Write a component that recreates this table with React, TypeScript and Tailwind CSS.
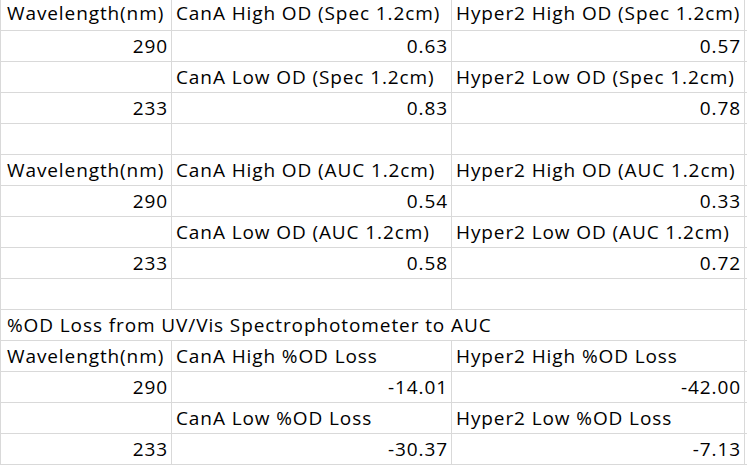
type Cell = { text?: string; align?: 'left' | 'right'; span?: boolean };

const rows: Cell[][] = [
  [{ text: 'Wavelength(nm)' }, { text: 'CanA High OD (Spec 1.2cm)' }, { text: 'Hyper2 High OD (Spec 1.2cm)' }],
  [{ text: '290', align: 'right' }, { text: '0.63', align: 'right' }, { text: '0.57', align: 'right' }],
  [{}, { text: 'CanA Low OD (Spec 1.2cm)' }, { text: 'Hyper2 Low OD (Spec 1.2cm)' }],
  [{ text: '233', align: 'right' }, { text: '0.83', align: 'right' }, { text: '0.78', align: 'right' }],
  [{}, {}, {}],
  [{ text: 'Wavelength(nm)' }, { text: 'CanA High OD (AUC 1.2cm)' }, { text: 'Hyper2 High OD (AUC 1.2cm)' }],
  [{ text: '290', align: 'right' }, { text: '0.54', align: 'right' }, { text: '0.33', align: 'right' }],
  [{}, { text: 'CanA Low OD (AUC 1.2cm)' }, { text: 'Hyper2 Low OD (AUC 1.2cm)' }],
  [{ text: '233', align: 'right' }, { text: '0.58', align: 'right' }, { text: '0.72', align: 'right' }],
  [{}, {}, {}],
  [{ text: '%OD Loss from UV/Vis Spectrophotometer to AUC', span: true }],
  [{ text: 'Wavelength(nm)' }, { text: 'CanA High %OD Loss' }, { text: 'Hyper2 High %OD Loss' }],
  [{ text: '290', align: 'right' }, { text: '-14.01', align: 'right' }, { text: '-42.00', align: 'right' }],
  [{}, { text: 'CanA Low %OD Loss' }, { text: 'Hyper2 Low %OD Loss' }],
  [{ text: '233', align: 'right' }, { text: '-30.37', align: 'right' }, { text: '-7.13', align: 'right' }],
];

export default function App() {
  return (
    <div className="w-[747px] h-[466px] overflow-hidden bg-white text-black font-['Open_Sans',sans-serif] text-[19px] tracking-[0.9px]">
      <div className="grid grid-cols-[172px_280px_293px_1fr]">
        {rows.map((row, r) => {
          const lead = r === 0 ? 'leading-[27px]' : 'leading-[30px]';
          const cells = row.map((c, i) => {
            const first = i === 0;
            const border = first ? 'border-l border-r border-b' : 'border-r border-b';
            const pad = first ? 'pl-[6px]' : 'pl-[4px]';
            const align = c.align === 'right' ? 'text-right pr-[3px]' : pad;
            return (
              <div
                key={i}
                className={`h-[31px] whitespace-nowrap overflow-visible border-[#d9d9d9] ${border} ${lead} ${align} ${c.span ? 'col-span-3' : ''}`}
              >
                {c.text}
              </div>
            );
          });
          return [
            ...cells,
            <div key="end" className="h-[31px] border-b border-[#d9d9d9]" />,
          ];
        })}
      </div>
    </div>
  );
}
